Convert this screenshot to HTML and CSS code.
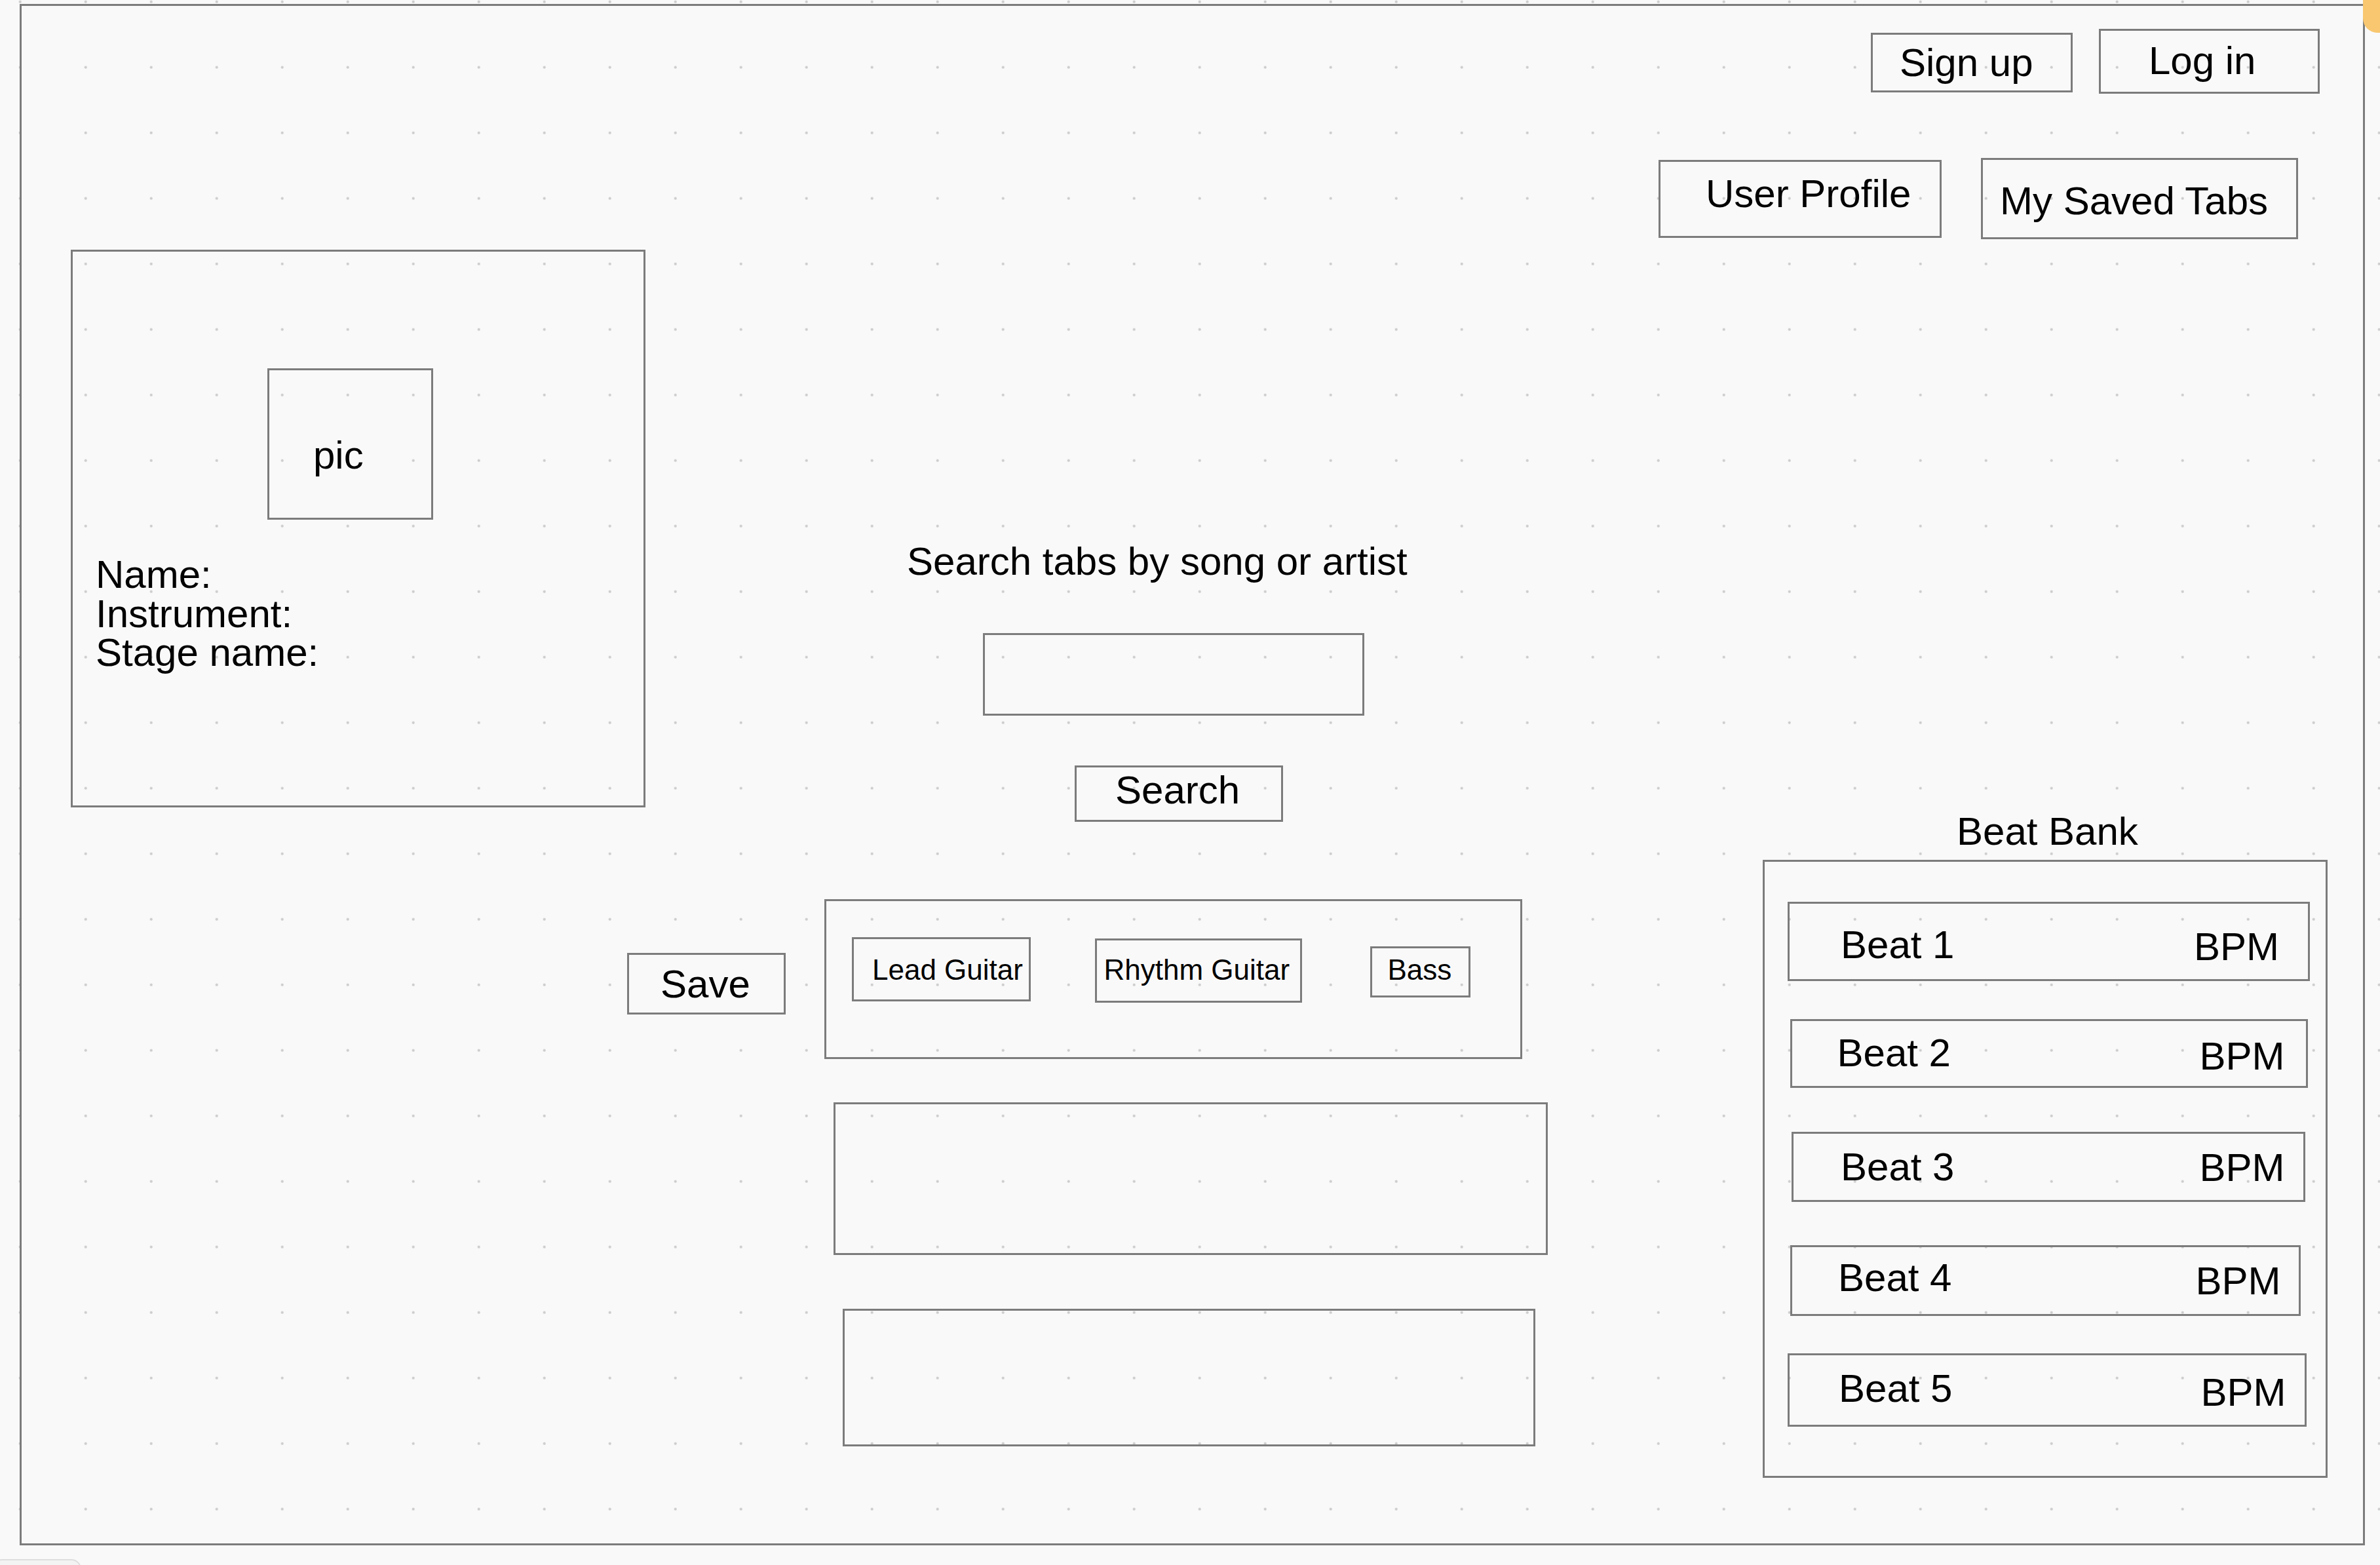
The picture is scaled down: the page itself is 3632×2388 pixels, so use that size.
FILE: index.html
```html
<!DOCTYPE html>
<html lang="en">
<head>
<meta charset="utf-8">
<title>Tabs wireframe</title>
<link rel="stylesheet" href="styles.css">
</head>
<body>
<div class="canvas">
  <div class="shape frame"></div>

  <div class="shape btn signup">Sign up</div>
  <div class="shape btn login">Log in</div>
  <div class="shape btn profile-btn">User Profile</div>
  <div class="shape btn saved-btn">My Saved Tabs</div>

  <div class="shape profile">
    <div class="shape-box pic">pic</div>
    <div class="info">
      <div>Name:</div>
      <div>Instrument:</div>
      <div>Stage name:</div>
    </div>
  </div>

  <div class="label search-label">Search tabs by song or artist</div>
  <div class="shape search-input"></div>
  <div class="shape btn search-btn">Search</div>

  <div class="shape btn save-btn">Save</div>
  <div class="shape instruments">
    <div class="shape-box tab lead">Lead Guitar</div>
    <div class="shape-box tab rhythm">Rhythm Guitar</div>
    <div class="shape-box tab bass">Bass</div>
  </div>

  <div class="shape panel panel-1"></div>
  <div class="shape panel panel-2"></div>

  <div class="label bank-label">Beat Bank</div>
  <div class="shape bank">
    <div class="shape-box beat beat-1"><span class="beat-name">Beat 1</span><span class="bpm">BPM</span></div>
    <div class="shape-box beat beat-2"><span class="beat-name">Beat 2</span><span class="bpm">BPM</span></div>
    <div class="shape-box beat beat-3"><span class="beat-name">Beat 3</span><span class="bpm">BPM</span></div>
    <div class="shape-box beat beat-4"><span class="beat-name">Beat 4</span><span class="bpm">BPM</span></div>
    <div class="shape-box beat beat-5"><span class="beat-name">Beat 5</span><span class="bpm">BPM</span></div>
  </div>

  <div class="corner-tab"></div>
  <div class="tab-bottom"></div>
</div>
</body>
</html>
```

FILE: styles.css
```css
html, body {
  margin: 0;
  padding: 0;
}

body {
  width: 3632px;
  height: 2388px;
  overflow: hidden;
  background-color: #f9f9f9;
  font-family: "Liberation Sans", Arial, Helvetica, sans-serif;
  font-size: 60px;
  line-height: 60px;
  color: #000;
}

.canvas {
  position: relative;
  width: 3632px;
  height: 2388px;
  background-image: radial-gradient(circle at center, #cdcdcd 0, #cdcdcd 1.6px, rgba(205,205,205,0) 2.4px);
  background-size: 100px 100px;
  background-position: -19.3px -47.3px;
  overflow: hidden;
}

.shape {
  position: absolute;
  box-sizing: border-box;
  border: 3px solid #7c7c7c;
  white-space: nowrap;
}

.shape-box {
  box-sizing: border-box;
  border: 3px solid #7c7c7c;
  white-space: nowrap;
  flex: none;
}

.label {
  position: absolute;
  white-space: nowrap;
}

/* outer frame */
.frame { left: 30px; top: 6px; width: 3579px; height: 2352px; }

/* top right buttons */
.signup      { left: 2855px; top: 50px;  width: 308px; height: 91px;  padding: 13px 0 0 41px; }
.login       { left: 3203px; top: 44px;  width: 337px; height: 99px;  padding: 16px 0 0 73px; }
.profile-btn { left: 2531px; top: 244px; width: 432px; height: 119px; padding: 19px 0 0 69px; }
.saved-btn   { left: 3023px; top: 241px; width: 484px; height: 124px; padding: 33px 0 0 26px; }

/* profile card */
.profile { left: 108px; top: 381px; width: 877px; height: 851px; }
.pic {
  width: 253px;
  height: 231px;
  margin: 178px 0 0 297px;
  padding: 100px 0 0 67px;
}
.info {
  margin: 54px 0 0 35px;
  line-height: 59.5px;
}

/* search */
.search-label { left: 1384px; top: 827px; }
.search-input { left: 1500px; top: 966px; width: 582px; height: 126px; }
.search-btn   { left: 1640px; top: 1168px; width: 318px; height: 86px; padding: 5px 0 0 59px; }

/* save + instruments */
.save-btn { left: 957px; top: 1454px; width: 242px; height: 94px; padding: 15px 0 0 48px; }

.instruments {
  left: 1258px;
  top: 1372px;
  width: 1065px;
  height: 244px;
  display: flex;
  align-items: flex-start;
}
.tab {
  font-size: 44px;
  line-height: 44px;
}
.lead   { width: 273px; height: 98px; margin: 55px 0 0 39px;  padding: 25px 0 0 28px; }
.rhythm { width: 316px; height: 98px; margin: 57px 0 0 98px;  padding: 23px 0 0 10.5px; }
.bass   { width: 153px; height: 78px; margin: 69px 0 0 104px; padding: 11px 0 0 23.5px; }

/* empty panels */
.panel-1 { left: 1272px; top: 1682px; width: 1090px; height: 233px; }
.panel-2 { left: 1286px; top: 1997px; width: 1057px; height: 210px; }

/* beat bank */
.bank-label { left: 2986px; top: 1239px; }
.bank {
  left: 2690px;
  top: 1312px;
  width: 862px;
  height: 943px;
  display: flex;
  flex-direction: column;
  align-items: flex-start;
}
.beat {
  display: flex;
  align-items: flex-start;
}
.bpm { margin-left: auto; }

.beat-1 { width: 797px; height: 121px; margin: 61px 0 0 35px; padding-right: 44px; }
.beat-1 .beat-name { margin: 33px 0 0 78px; }
.beat-1 .bpm       { margin-top: 36px; }

.beat-2 { width: 790px; height: 105px; margin: 58px 0 0 39px; padding-right: 32.5px; }
.beat-2 .beat-name { margin: 19px 0 0 68.5px; }
.beat-2 .bpm       { margin-top: 24px; }

.beat-3 { width: 784px; height: 107px; margin: 67px 0 0 41px; padding-right: 28.5px; }
.beat-3 .beat-name { margin: 21px 0 0 72px; }
.beat-3 .bpm       { margin-top: 22px; }

.beat-4 { width: 779px; height: 108px; margin: 66px 0 0 39px; padding-right: 27.5px; }
.beat-4 .beat-name { margin: 17px 0 0 70px; }
.beat-4 .bpm       { margin-top: 22px; }

.beat-5 { width: 792px; height: 112px; margin: 57px 0 0 35px; padding-right: 28.5px; }
.beat-5 .beat-name { margin: 21px 0 0 75px; }
.beat-5 .bpm       { margin-top: 27px; }

/* editor chrome overlapping the canvas */
.corner-tab {
  position: absolute;
  left: 3606px;
  top: 0;
  width: 40px;
  height: 50px;
  background: #f8c76f;
  border-bottom-left-radius: 22px;
}
.tab-bottom {
  position: absolute;
  left: -12px;
  top: 2379px;
  width: 136px;
  height: 30px;
  box-sizing: border-box;
  border: 2px solid #dedede;
  border-radius: 16px;
  background: #f3f3f3;
}
```
